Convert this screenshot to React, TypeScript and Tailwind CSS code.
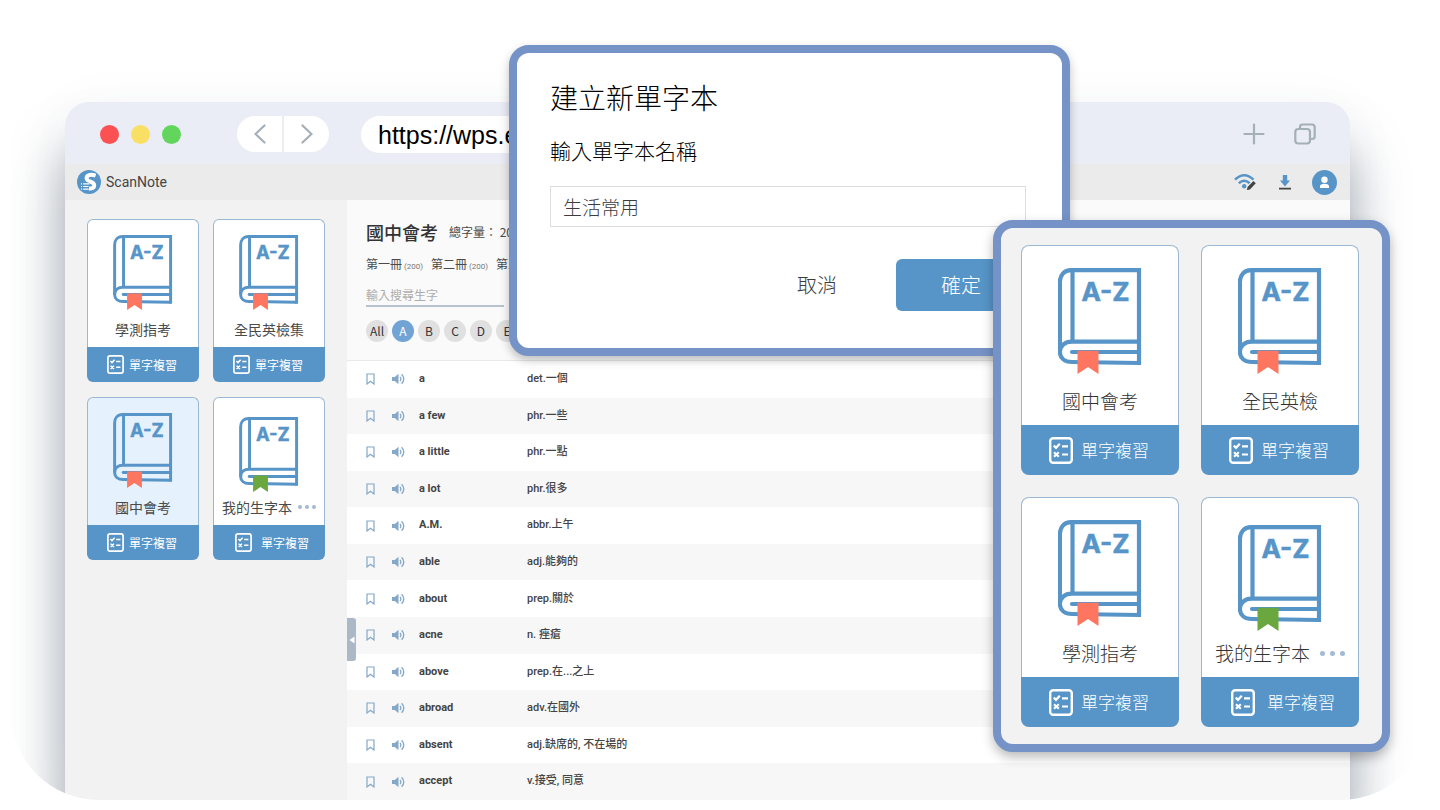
type Size = "sm" | "lg";

type Notebook = {
  name: string;
  active?: boolean;
  own?: boolean;
};

const sidebarBooks: Notebook[] = [
  { name: "學測指考" },
  { name: "全民英檢集" },
  { name: "國中會考", active: true },
  { name: "我的生字本", own: true },
];

const panelBooks: Notebook[] = [
  { name: "國中會考" },
  { name: "全民英檢" },
  { name: "學測指考" },
  { name: "我的生字本", own: true },
];

const words = [
  ["a", "det.一個"],
  ["a few", "phr.一些"],
  ["a little", "phr.一點"],
  ["a lot", "phr.很多"],
  ["A.M.", "abbr.上午"],
  ["able", "adj.能夠的"],
  ["about", "prep.關於"],
  ["acne", "n. 痤瘡"],
  ["above", "prep.在...之上"],
  ["abroad", "adv.在國外"],
  ["absent", "adj.缺席的, 不在場的"],
  ["accept", "v.接受, 同意"],
];

const volumes = ["第一冊", "第二冊", "第三冊"];
const letters = ["All", "A", "B", "C", "D", "E"];

function BookIcon({ size, green }: { size: Size; green?: boolean }) {
  return (
    <svg
      viewBox="0 0 84 106"
      aria-hidden="true"
      className={size === "sm" ? "h-[75px] w-[60px]" : "h-[106px] w-[84px]"}
    >
      <g fill="none" stroke="#5795c8" strokeWidth="4.2">
        <path d="M81 97V2.2H13C6 2.2 1.9 7.5 1.9 14V84" />
        <path d="M14.5 2.2V73.7" />
        <path d="M81 73.7H14C6.500 73.7 1.9 78 1.9 84C1.9 90 6.5 94 14 94L81 95" />
        <path d="M14 84H81" strokeLinecap="round" />
      </g>
      <path d="M19.5 82.7H40.5V106L30 99L19.5 106Z" fill={green ? "#6aa73f" : "#ff7660"} />
      <text x="23.5" y="33.3" fontSize="26" fontWeight="700" fontFamily="Inter, sans-serif" fill="#5795c8" stroke="#5795c8" strokeWidth="0.6">
        A-Z
      </text>
    </svg>
  );
}

function QuizIcon({ size }: { size: Size }) {
  return (
    <svg
      viewBox="0 0 24 27"
      aria-hidden="true"
      fill="none"
      stroke="#fff"
      className={size === "sm" ? "h-[19px] w-[17px] shrink-0" : "h-[27px] w-6 shrink-0"}
    >
      <rect x="1.2" y="1.2" width="21.6" height="24.6" rx="3" strokeWidth="2.4" />
      <path d="M4.8 8.6L7 10.8L10.8 6.8M13 9.3H19M5 15.3L9.8 19.8M9.8 15.3L5 19.8M13 17.5H19" strokeWidth="2.2" />
    </svg>
  );
}

function NotebookCard({ book, size }: { book: Notebook; size: Size }) {
  const sm = size === "sm";
  return (
    <article className={sm ? "w-28" : "w-[158px]"}>
      <div
        className={[
          "flex flex-col items-center border border-b-0 border-[#9bb8d2]",
          sm ? "h-32 rounded-t-md pb-2" : "h-[180px] rounded-t-lg pb-[10px]",
          book.active ? "bg-[#e5f1fd]" : "bg-white",
          sm ? (book.own ? "pt-[19px]" : "pt-[15px]") : book.own ? "pt-[27px]" : "pt-[22px]",
        ].join(" ")}
      >
        <BookIcon size={size} green={book.own} />
        <div className={sm ? "mt-auto flex items-center gap-[6px]" : "mt-auto flex items-center gap-[10px]"}>
          <h3
            className={
              sm
                ? "text-sm leading-5 whitespace-nowrap text-[#4a4a4a]"
                : "text-[19px] leading-7 font-light whitespace-nowrap text-[#333]"
            }
          >
            {book.name}
          </h3>
          {book.own && (
            <button type="button" aria-label="更多" className={sm ? "flex gap-[3px]" : "flex gap-[5px]"}>
              {[0, 1, 2].map((i) => (
                <span key={i} className={sm ? "size-1 rounded-full bg-[#a3b9d6]" : "size-[5px] rounded-full bg-[#a3b9d6]"} />
              ))}
            </button>
          )}
        </div>
      </div>
      <button
        type="button"
        className={[
          "flex w-full items-center bg-[#5795c8] text-white",
          sm ? "h-[35px] rounded-b-md text-xs" : "h-[50px] rounded-b-lg text-[17px] font-light",
          sm ? (book.own ? "gap-[9px] pl-[22px]" : "gap-[5px] pl-5") : book.own ? "gap-3 pl-[30px]" : "gap-2 pl-7",
        ].join(" ")}
      >
        <QuizIcon size={size} />
        <span className="whitespace-nowrap">單字複習</span>
      </button>
    </article>
  );
}

function BrowserBar() {
  return (
    <div className="flex h-[62px] shrink-0 items-center bg-[#eaedf6] pt-[2px] pr-[34px] pl-[35px]">
      <div className="flex gap-3">
        <span className="size-[19px] rounded-full bg-[#fb5152]" />
        <span className="size-[19px] rounded-full bg-[#f9e065]" />
        <span className="size-[19px] rounded-full bg-[#62d55d]" />
      </div>
      <div className="ml-14 flex h-9 w-[92px] gap-[2px]">
        <button type="button" aria-label="上一頁" className="flex flex-1 items-center justify-center rounded-l-full bg-white">
          <svg viewBox="0 0 12 20" className="h-5 w-3" fill="none" stroke="#a4afb8" strokeWidth="2.2" strokeLinecap="round">
            <path d="M10.5 1.5L1.5 10L10.5 18.5" />
          </svg>
        </button>
        <button type="button" aria-label="下一頁" className="flex flex-1 items-center justify-center rounded-r-full bg-white">
          <svg viewBox="0 0 12 20" className="h-5 w-3" fill="none" stroke="#a4afb8" strokeWidth="2.2" strokeLinecap="round">
            <path d="M1.5 1.5L10.5 10L1.5 18.5" />
          </svg>
        </button>
      </div>
      <input
        type="text"
        aria-label="網址"
        defaultValue="https://wps.e"
        className="mr-60 ml-8 h-[37px] min-w-0 flex-1 rounded-full bg-white px-[17px] pt-1 font-['Liberation_Sans',sans-serif] text-[25px] text-black outline-none"
      />
      <button type="button" aria-label="新分頁">
        <svg viewBox="0 0 22 22" className="size-[22px]" stroke="#a4b0b7" strokeWidth="2.2" strokeLinecap="round">
          <path d="M11 1.5V20.5M1.5 11H20.5" />
        </svg>
      </button>
      <button type="button" aria-label="所有分頁" className="ml-[29px]">
        <svg viewBox="0 0 22 22" className="size-[22px]" fill="none" stroke="#a4b0b7" strokeWidth="2.2">
          <rect x="1.3" y="6" width="14.7" height="14.5" rx="3" />
          <path d="M6 6V4Q6 1.5 8.5 1.5H18Q20.7 1.5 20.7 4.2V13.5Q20.7 16 18 16H16" />
        </svg>
      </button>
    </div>
  );
}

function AppBar() {
  return (
    <header className="flex h-9 shrink-0 items-center bg-[#ebebeb] pr-[13px] pl-3">
      <a href="#" className="flex items-center gap-[5px]">
        <svg viewBox="0 0 24 24" className="size-6" aria-hidden="true">
          <circle cx="12" cy="12" r="12" fill="#5795c8" />
          <path
            d="M18.6 5.6C14.5 4.3 9.6 4.4 9.6 8.2C9.6 12.2 17.2 11.2 17.2 15.2C17.2 18.5 14 18.7 11.8 18.4"
            fill="none"
            stroke="#fff"
            strokeWidth="4"
          />
          <path d="M3.5 12.5H11.5V20.5H3.5Z" fill="#5795c8" />
          <path d="M4 13.8H5M6.2 13.8H12.5M4 16.5H5M6.2 16.5H11.5M4 19.2H5M6.2 19.2H11.5" stroke="#fff" strokeWidth="1.2" />
        </svg>
        <span className="font-['Roboto',sans-serif] text-sm text-[#444]">ScanNote</span>
      </a>
      <div className="ml-auto flex items-center">
        <button type="button" aria-label="掃描筆連線">
          <svg viewBox="0 0 22 18" className="h-[18px] w-[22px]" fill="none">
            <path d="M1 6.6Q10.2 -2 19.5 6.6" stroke="#5795c8" strokeWidth="2.5" />
            <path d="M4.8 10.2Q10.2 5.3 15.7 10.2" stroke="#5795c8" strokeWidth="2.5" />
            <circle cx="10.2" cy="13.2" r="2.2" fill="#5795c8" />
            <path d="M13.8 15.6L20.7 8.5" stroke="#ebebeb" strokeWidth="4.5" />
            <path d="M12.8 17L13.6 14L19.4 8L21.8 10.2L15.9 16.4Z" fill="#444" />
          </svg>
        </button>
        <button type="button" aria-label="下載" className="ml-[23px]">
          <svg viewBox="0 0 12 16" className="h-4 w-3">
            <path d="M3.8 1H8.2V6.5H11L6 12.5L1 6.5H3.8Z" fill="#5795c8" />
            <path d="M0 14.6H12" stroke="#444" strokeWidth="1.6" />
          </svg>
        </button>
        <button type="button" aria-label="帳號" className="ml-[21px]">
          <svg viewBox="0 0 25 25" className="size-[25px]">
            <circle cx="12.5" cy="12.5" r="12.5" fill="#5795c8" />
            <circle cx="12.5" cy="9.7" r="3.2" fill="#fff" />
            <path d="M8 18V16.5Q8 13.7 12.5 13.7Q17 13.7 17 16.5V18Z" fill="#fff" />
          </svg>
        </button>
      </div>
    </header>
  );
}

function WordHeader() {
  return (
    <div className="border-b border-[#e8e8e8] bg-[#fafafa] pt-[18px] pb-[18px] pl-[19px] text-xs text-[#4a4a4a]">
      <div className="flex h-7 items-center gap-[11px]">
        <h1 className="text-lg leading-7 font-medium text-[#333]">國中會考</h1>
        <p>總字量： 200</p>
      </div>
      <nav className="mt-[6px] flex h-6 items-center gap-2">
        {volumes.map((v) => (
          <a key={v} href="#" className="whitespace-nowrap">
            {v}
            <span className="ml-[2px] font-['Roboto',sans-serif] text-[8px] text-[#777]">(200)</span>
          </a>
        ))}
      </nav>
      <input
        type="search"
        aria-label="輸入搜尋生字"
        placeholder="輸入搜尋生字"
        className="mt-2 block h-[23px] w-[138px] border-b-2 border-[#b7c3cf] bg-transparent text-xs outline-none placeholder:text-[#adadad]"
      />
      <div className="mt-[13px] flex gap-1">
        {letters.map((l) => (
          <button
            key={l}
            type="button"
            className={
              l === "A"
                ? "flex size-[22px] items-center justify-center rounded-full bg-[#72a3d5] text-white"
                : "flex size-[22px] items-center justify-center rounded-full bg-[#e0e0e0] text-[#333]"
            }
          >
            {l}
          </button>
        ))}
      </div>
    </div>
  );
}

function WordTable() {
  return (
    <div className="flex flex-1">
      <table className="w-full border-collapse font-['Roboto','Noto_Sans_CJK_TC',sans-serif] text-[11px] text-[#444]">
        <tbody>
          {words.map(([word, meaning]) => (
            <tr key={word} className="bg-white even:bg-[#f7f7f7]">
              <td className="w-[45px] p-0 pl-[19px]">
                <button type="button" aria-label="收藏" className="block">
                  <svg viewBox="0 0 9 12" className="h-3 w-[9px]" fill="none" stroke="#86a8c8" strokeWidth="1.2">
                    <path d="M1 1H8V11L4.5 8.2L1 11Z" />
                  </svg>
                </button>
              </td>
              <td className="w-[27px] p-0">
                <button type="button" aria-label="發音" className="block">
                  <svg viewBox="0 0 13 12" className="h-3 w-[13px]">
                    <path d="M0 4H2.8L6.5 0.8V11.2L2.8 8H0Z" fill="#86a8c8" />
                    <path d="M8 3.8Q9.8 6 8 8.2M9.6 1.3Q14 6 9.6 10.7" fill="none" stroke="#86a8c8" strokeWidth="1.3" />
                  </svg>
                </button>
              </td>
              <th scope="row" className="w-[108px] p-0 text-left font-bold">
                {word}
              </th>
              <td className="p-0 font-medium">{meaning}</td>
            </tr>
          ))}
        </tbody>
      </table>
    </div>
  );
}

function CreateDialog() {
  return (
    <section
      role="dialog"
      aria-labelledby="create-title"
      className="absolute top-[45px] left-[498px] w-[561px] rounded-[20px] border-8 border-[#7593c6] bg-white pt-6 pr-9 pb-[37px] pl-[33px] font-light text-black shadow-[0_4px_10px_rgba(0,0,0,0.25)]"
    >
      <h2 id="create-title" className="text-[28px] leading-10">
        建立新單字本
      </h2>
      <label htmlFor="notebook-name" className="mt-[18px] block text-[21px] leading-[30px]">
        輸入單字本名稱
      </label>
      <input
        id="notebook-name"
        type="text"
        defaultValue="生活常用"
        className="mt-[21px] block h-[41px] w-full border border-[#dedede] px-3 text-[19px] text-[#3c3c3c] outline-none"
      />
      <div className="mt-8 flex justify-end gap-[14px] text-xl">
        <button type="button" className="h-[52px] w-[130px] text-[#3c3c3c]">
          取消
        </button>
        <button type="button" className="h-[52px] w-[130px] rounded-md bg-[#5795c8] text-white">
          確定
        </button>
      </div>
    </section>
  );
}

export default function App() {
  return (
    <div className="min-h-screen bg-white px-[11px] font-['Noto_Sans_CJK_TC',sans-serif]">
      <div className="relative flex h-[calc(100vh-10px)] flex-col overflow-hidden rounded-b-[88px] pt-[102px] pr-[79px] pl-[54px]">
        <div className="flex min-h-0 flex-1 flex-col rounded-t-[24px] shadow-[0_48px_52px_rgba(60,75,95,0.5),0_8px_56px_rgba(60,75,95,0.05)]">
          <div className="flex min-h-0 flex-1 flex-col overflow-hidden rounded-t-[24px]">
            <BrowserBar />
            <AppBar />
            <div className="flex min-h-0 flex-1">
              <aside className="w-[282px] shrink-0 bg-[#f2f2f2] pt-[19px] pl-[22px]">
                <div className="flex flex-wrap gap-x-[14px] gap-y-[15px]">
                  {sidebarBooks.map((b) => (
                    <NotebookCard key={b.name} book={b} size="sm" />
                  ))}
                </div>
              </aside>
              <main className="relative flex min-w-0 flex-1 flex-col">
                <WordHeader />
                <WordTable />
                <button
                  type="button"
                  aria-label="收合側欄"
                  className="absolute top-[418px] left-0 flex h-[43px] w-[9px] items-center justify-center rounded-r-[3px] bg-[#aab8c7]"
                >
                  <svg viewBox="0 0 6 8" className="h-2 w-[6px]">
                    <path d="M5.5 0.5V7.5L0.5 4Z" fill="#fff" />
                  </svg>
                </button>
              </main>
            </div>
          </div>
        </div>
        <CreateDialog />
        <section
          aria-label="單字本"
          className="absolute top-[220px] right-[39px] rounded-[20px] border-8 border-[#7593c6] bg-[#f2f2f2] py-[17px] pr-[23px] pl-5 shadow-[0_5px_12px_rgba(0,0,0,0.28)]"
        >
          <div className="grid grid-cols-2 gap-[22px]">
            {panelBooks.map((b) => (
              <NotebookCard key={b.name} book={b} size="lg" />
            ))}
          </div>
        </section>
      </div>
    </div>
  );
}
